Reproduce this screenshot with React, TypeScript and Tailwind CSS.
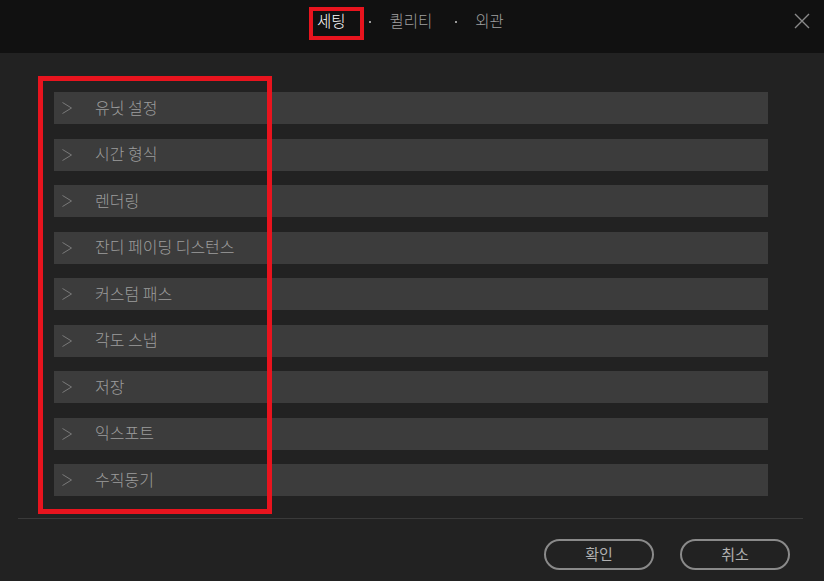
import React from "react";

const items = [
  "유닛 설정",
  "시간 형식",
  "렌더링",
  "잔디 페이딩 디스턴스",
  "커스텀 패스",
  "각도 스냅",
  "저장",
  "익스포트",
  "수직동기",
];

export default function App() {
  return (
    <div
      className="relative w-[824px] h-[581px] bg-[#222222] overflow-hidden flex flex-col"
      style={{ fontFamily: '"Noto Sans CJK KR", "Noto Sans", sans-serif' }}
    >
      <div className="relative h-[53px] bg-[#111111] flex items-start pl-[317px] pt-[9px] shrink-0">
        <div className="flex items-center text-[15.5px] leading-[22px] font-light">
          <span className="relative text-white">
            세팅
            <span className="absolute left-[-8px] right-[-18px] top-[-2px] bottom-[-9px] border-[4px] border-[#e8141e]" />
          </span>
          <span className="w-[2px] h-[2px] bg-[#9a9a9a] ml-[23px] mr-[19px] mt-[3px]" />
          <span className="text-[#a0a0a0]">퀼리티</span>
          <span className="w-[2px] h-[2px] bg-[#9a9a9a] ml-[23px] mr-[18px] mt-[3px]" />
          <span className="text-[#a0a0a0]">외관</span>
        </div>
        <svg
          className="absolute left-[794px] top-[13px]"
          width="16"
          height="16"
          viewBox="0 0 16 16"
        >
          <path d="M1 1 L15 15 M15 1 L1 15" stroke="#8a8a8a" strokeWidth="1.4" />
        </svg>
      </div>

      <div className="relative flex-1 flex flex-col">
        <div className="flex flex-col gap-[14.5px] pt-[39px] pl-[54px] pr-[56px]">
          {items.map((t) => (
            <div
              key={t}
              className="h-[32px] bg-[#3c3c3c] flex items-center text-[16px] font-light text-[#9c9c9c]"
            >
              <span className="w-[41px] pl-[8px] flex items-center">
                <svg width="10" height="12" viewBox="0 0 10 12">
                  <path d="M0.5 0.5 L9.5 6 L0.5 11.5" fill="none" stroke="#7a7a7a" strokeWidth="1" />
                </svg>
              </span>
              <span className="leading-[20px] mt-[-3px]">{t}</span>
            </div>
          ))}
        </div>
        <div className="absolute left-[38px] top-[23px] w-[234px] h-[438px] border-[5px] border-[#e8141e]" />
      </div>

      <div className="mx-[18px] mr-[21px] h-px bg-[#3a3a3a] shrink-0" />
      <div className="h-[62px] flex items-start justify-end gap-[26px] pr-[34px] pt-[20px] shrink-0">
        <button className="w-[110px] h-[31px] rounded-full border-2 border-[#8a8a8a] text-[15px] text-[#b0b0b0] flex items-center justify-center">
          확인
        </button>
        <button className="w-[110px] h-[31px] rounded-full border-2 border-[#8a8a8a] text-[15px] text-[#b0b0b0] flex items-center justify-center">
          취소
        </button>
      </div>
    </div>
  );
}
